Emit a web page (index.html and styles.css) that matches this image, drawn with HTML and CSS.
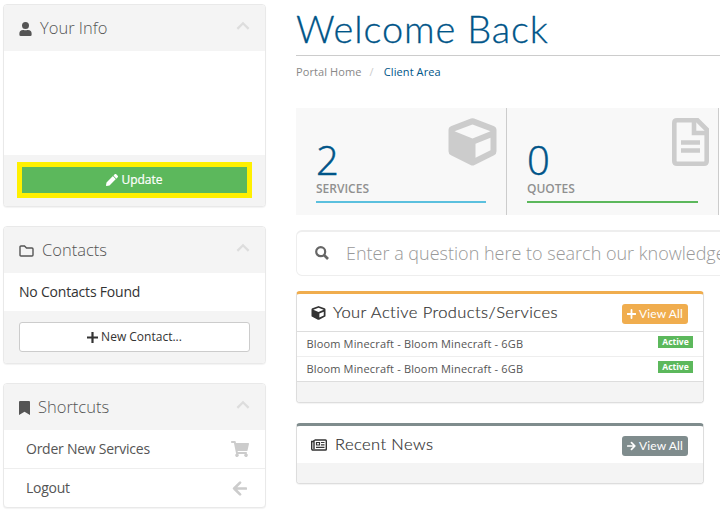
FILE: index.html
```html
<!DOCTYPE html>
<html lang="en">
<head>
<meta charset="utf-8">
<title>Client Area</title>
<link rel="stylesheet" href="styles.css">
</head>
<body>
<svg class="defs" width="0" height="0" aria-hidden="true">
  <symbol id="chevron" viewBox="0 0 12 8"><path d="M1 7l5-5 5 5" fill="none" stroke="currentColor" stroke-width="2"/></symbol>
  <symbol id="plus" viewBox="0 0 10 10"><path d="M5 .5v9M.5 5h9" fill="none" stroke="currentColor" stroke-width="2" stroke-linecap="round"/></symbol>
  <symbol id="cube" viewBox="0 0 512 512"><path fill-rule="evenodd" d="M239 6L31 84A48 48 0 0 0 0 129v225a48 48 0 0 0 27 43l208 104a48 48 0 0 0 43 0l208-104a48 48 0 0 0 26-43V129a48 48 0 0 0-31-45L273 6a48 48 0 0 0-34 0zM256 68l192 72v1l-192 78-192-78v-1zM288 425V275l160-65v135z" fill="currentColor"/></symbol>
  <symbol id="arrow" viewBox="0 0 12 12"><path d="M1 6h9.500M6 1.500L10.500 6 6 10.500" fill="none" stroke="currentColor" stroke-width="2.200" stroke-linecap="round" stroke-linejoin="round"/></symbol>
</svg>
<div class="page">
  <aside class="sidebar">
    <section class="side-panel info">
      <header class="side-head">
        <svg class="i-user" viewBox="0 0 448 512"><path fill="currentColor" d="M224 256a128 128 0 1 0 0-256 128 128 0 0 0 0 256zm90 32h-17a174 174 0 0 1-146 0h-17A134 134 0 0 0 0 422v42a48 48 0 0 0 48 48h352a48 48 0 0 0 48-48v-42a134 134 0 0 0-134-134z"/></svg>
        <h3>Your Info</h3><svg class="chevron"><use href="#chevron"/></svg>
      </header>
      <div class="info-body"></div>
      <footer class="side-foot info-foot">
        <a class="update"><svg class="i-pencil" viewBox="0 0 512 512"><path fill="currentColor" d="M498 142l-46 46c-5 5-13 5-17 0L324 77c-5-5-5-12 0-17l46-46c19-19 49-19 68 0l60 60c19 19 19 49 0 68zm-214-42L22 362 0 484c-3 16 12 30 28 28l122-22 262-262c5-5 5-13 0-17L301 100c-4-5-12-5-17 0z"/></svg><span>Update</span></a>
      </footer>
    </section>

    <section class="side-panel contacts">
      <header class="side-head">
        <svg class="i-folder" viewBox="0 0 15 12"><path d="M1 10V2q0-1 1-1h3.500l2 2H13q1 0 1 1v6q0 1-1 1H2q-1 0-1-1z" fill="none" stroke="currentColor" stroke-width="1.400"/></svg>
        <h3>Contacts</h3><svg class="chevron"><use href="#chevron"/></svg>
      </header>
      <p class="empty">No Contacts Found</p>
      <footer class="side-foot contact-foot"><a class="new-contact"><svg class="i-plus"><use href="#plus"/></svg><span>New Contact...</span></a></footer>
    </section>

    <section class="side-panel shortcuts">
      <header class="side-head">
        <svg class="i-mark" viewBox="0 0 11 14"><path d="M0 14V1q0-1 1-1h9q1 0 1 1v13l-5.500-3.200z" fill="currentColor"/></svg>
        <h3>Shortcuts</h3><svg class="chevron"><use href="#chevron"/></svg>
      </header>
      <a class="side-link"><span class="order">Order New Services</span><svg class="i-cart" viewBox="0 0 576 512"><path fill="currentColor" d="M528 301l47-208a24 24 0 0 0-23-29H159l-9-45A24 24 0 0 0 126 0H24A24 24 0 0 0 0 24v16a24 24 0 0 0 24 24h70l70 343a56 56 0 1 0 67 9h210a56 56 0 1 0 64-10l5-25a24 24 0 0 0-23-29H218l-7-32h294a24 24 0 0 0 23-19z"/></svg></a>
      <a class="side-link"><span>Logout</span><svg class="i-back" viewBox="0 0 14 14"><path d="M13 7H2M7.500 1.500L2 7l5.500 5.500" fill="none" stroke="currentColor" stroke-width="2.500" stroke-linecap="round" stroke-linejoin="round"/></svg></a>
    </section>
  </aside>

  <main class="main">
    <h1><span>Welcome Back</span></h1>
    <nav class="crumbs"><a>Portal Home</a><i>/</i><b>Client Area</b></nav>
    <div class="tiles">
      <div class="tile services">
        <svg class="tile-cube"><use href="#cube"/></svg>
        <div class="stat">2</div><div class="label">SERVICES</div><div class="bar"></div>
      </div>
      <div class="tile quotes">
        <svg class="tile-doc" viewBox="0 0 37 48"><path d="M5 2.300h20.500L34.700 11.500V43q0 2.700-2.700 2.700H5q-2.700 0-2.700-2.700V5Q2.300 2.300 5 2.300z" fill="none" stroke="currentColor" stroke-width="4.600"/><path d="M22 3v12h13M9 24.500h19M9 32.500h19" fill="none" stroke="currentColor" stroke-width="4.600"/></svg>
        <div class="stat">0</div><div class="label">QUOTES</div><div class="bar"></div>
      </div>
    </div>
    <div class="search">
      <svg class="i-search" viewBox="0 0 14 14"><circle cx="5.700" cy="5.700" r="4.500" fill="none" stroke="currentColor" stroke-width="2.200"/><path d="M9 9l4 4" stroke="currentColor" stroke-width="2.600"/></svg>
      <span>Enter a question here to search our knowledgebase for answers...</span>
    </div>
    <section class="panel products">
      <header class="panel-head">
        <svg class="i-cube"><use href="#cube"/></svg><h2>Your Active Products/Services</h2>
        <a class="view"><svg class="i-vplus"><use href="#plus"/></svg><span>View All</span></a>
      </header>
      <div class="row"><span>Bloom Minecraft - Bloom Minecraft - 6GB</span><em>Active</em></div>
      <div class="row"><span>Bloom Minecraft - Bloom Minecraft - 6GB</span><em>Active</em></div>
      <footer class="panel-foot"></footer>
    </section>
    <section class="panel news">
      <header class="panel-head">
        <svg class="i-news" viewBox="0 0 16 12"><path d="M3.500 1h11q.8 0 .8.800v8.400q0 .8-.8.800H2Q.7 11 .7 9.700V2.500h2M3 1v9" fill="none" stroke="currentColor" stroke-width="1.400"/><path d="M5.500 3.500h3v2.500h-3zM10 3.500h3.500M10 5.800h3.500M5 8.300h8.500" fill="none" stroke="currentColor" stroke-width="1.200"/></svg>
        <h2>Recent News</h2>
        <a class="view"><svg class="i-varrow"><use href="#arrow"/></svg><span>View All</span></a>
      </header>
      <footer class="panel-foot"></footer>
    </section>
  </main>
</div>
</body>
</html>
```
FILE: styles.css
```css
* { box-sizing: border-box; }
body { margin: 0; background: #fff; color: #333; font: 14px/20px "Open Sans", "Noto Sans", sans-serif; overflow: hidden; }
h1, h2, h3, p { margin: 0; font-weight: 400; }
svg { flex: none; display: block; }
.defs { position: absolute; }
.page { display: flex; height: 511px; overflow: hidden; }

.sidebar { flex: none; width: 266px; padding: 4px 0 0 3px; display: flex; flex-direction: column; }
.side-panel { border: 1px solid #e9e9e9; border-radius: 4px; overflow: hidden; background: #fff; box-shadow: 0 1px 1px rgba(0,0,0,.05); }
.info { height: 203px; margin-bottom: 19px; }
.contacts { height: 138px; margin-bottom: 19px; }
.shortcuts { height: 125px; }
.side-head { height: 46px; background: #f4f4f4; display: flex; align-items: center; padding: 0 15px; color: #555; }
.side-head h3 { font-size: 16.500px; font-weight: 300; line-height: 24px; }
.side-head .chevron { width: 14px; height: 9px; margin: 0 0 5px auto; color: #ddd; }
.i-user { width: 13px; height: 14px; margin: 2px 8px 0 0; }
.i-folder { width: 15px; height: 12px; margin: 2px 8px 0 0; }
.i-mark { width: 11px; height: 14px; margin: 2px 8px 0 0; }
.info-body { height: 104px; }
.side-foot { background: #f4f4f4; }
.info-foot { height: 51px; padding: 7px 13px; }
.update { display: flex; height: 36px; border: 5px solid #fff000; background: #5cb85c; color: #fff; align-items: center; justify-content: center; gap: 3px; font-size: 12px; -webkit-text-stroke: .2px #fff; }
.i-pencil { width: 12px; height: 12px; }
.empty { height: 38px; padding: 0 15px; line-height: 38px; letter-spacing: -.2px; }
.contact-foot { height: 52px; padding: 11px 15px; }
.new-contact { display: flex; height: 30px; border: 1px solid #ccc; border-radius: 3px; background: #fff; align-items: center; justify-content: center; gap: 3px; font-size: 12px; }
.i-plus { width: 11px; height: 11px; }
.side-link { display: flex; height: 39px; align-items: center; justify-content: space-between; padding: 0 16px 0 22px; color: #555; border-bottom: 1px solid #eee; letter-spacing: -.25px; }
.side-link svg { color: #ccc; }
.i-cart { width: 18px; height: 16px; }
.i-back { width: 15px; height: 15px; margin-right: 2px; }

.main { flex: none; width: 440px; margin-left: 30px; }
h1 { height: 56px; border-bottom: 1px solid #ccc; padding-top: 6px; color: #058; font: 300 38px/44px Lato, sans-serif; letter-spacing: .85px; white-space: nowrap; -webkit-text-stroke: .3px #058; }
.crumbs { display: flex; height: 52px; padding-top: 6px; font-size: 11px; color: #888; letter-spacing: .1px; }
.crumbs i { font-style: normal; color: #ccc; margin: 0 10px 0 8px; }
.crumbs b { font-weight: 400; color: #058; }
.tiles { display: flex; height: 107px; }
.tile { position: relative; width: 211px; flex: none; padding: 32px 20px 0; background: #f8f8f8; border-right: 1px solid #ccc; }
.quotes { width: 212px; }
.stat { height: 41px; font-size: 40px; line-height: 40px; font-weight: 300; color: #058; -webkit-text-stroke: .5px #058; }
.label { font-size: 12px; font-weight: 600; line-height: 16px; color: #909090; }
.bar { height: 2px; margin-top: 4px; background: #5bc0de; }
.quotes .bar { background: #5cb85c; }
.tile-cube, .tile-doc { position: absolute; top: 10px; right: 9px; color: #ccc; }
.tile-cube { width: 49px; height: 48px; }
.tile-doc { width: 37px; height: 48px; }
.search { display: flex; width: 560px; height: 46px; margin-top: 15px; border: 1px solid #eee; border-top-width: 2px; border-radius: 6px; padding: 0 0 2px 18px; align-items: center; color: #999; font-size: 18px; font-weight: 300; white-space: nowrap; }
.i-search { width: 14px; height: 14px; margin-right: 17px; color: #666; }
.panel { width: 408px; border: 1px solid #ddd; border-top-width: 3px; border-radius: 4px; overflow: hidden; background: #fff; box-shadow: 0 1px 1px rgba(0,0,0,.05); }
.products { height: 112px; margin-top: 15px; border-top-color: #f0ad4e; }
.news { height: 61px; margin-top: 20px; border-top-color: #7f8c8d; }
.panel-head { display: flex; height: 38px; align-items: center; padding: 0 15px 0 14px; border-bottom: 1px solid #ddd; }
.panel-head h2 { font: 300 16.500px/20px Lato, sans-serif; letter-spacing: .42px; margin-bottom: 2px; white-space: nowrap; -webkit-text-stroke: .2px #333; }
.news .panel-head { height: 37px; border-bottom: 0; }
.i-cube { width: 15px; height: 14px; margin-right: 7px; }
.i-news { width: 16px; height: 12px; margin: 0 8px 0 0; }
.view { display: flex; width: 66px; height: 20px; margin: 3px 0 0 auto; border-radius: 3px; background: #f0ad4e; color: #fff; align-items: center; justify-content: center; gap: 3px; font: 400 12px/20px Lato, sans-serif; letter-spacing: .15px; white-space: nowrap; }
.news .view { background: #7f8c8d; }
.i-vplus, .i-varrow { width: 9px; height: 10px; }
.row { display: flex; height: 25px; justify-content: space-between; align-items: center; padding: 0 10px 0 9.500px; border-bottom: 1px solid #eee; color: #555; font-size: 11px; letter-spacing: .16px; white-space: nowrap; }
.row + .row { border-bottom-color: #ddd; }
.row em { width: 35px; height: 12px; margin-bottom: 4px; background: #5cb85c; color: #fff; font: 700 8.500px/12px "Open Sans", sans-serif; letter-spacing: 0; text-align: center; }
.panel-foot { height: 22px; background: #f4f4f4; }
```
